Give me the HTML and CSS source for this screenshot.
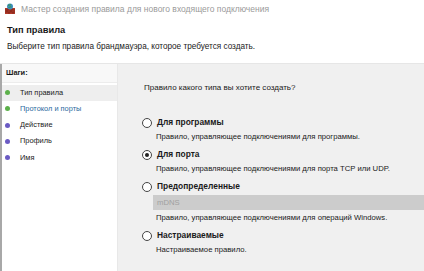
FILE: index.html
```html
<!DOCTYPE html>
<html>
<head>
    <title>Мастер создания правила</title>
    <link rel="stylesheet" href="styles.css">
</head>
<body>
    <div class="titlebar">
        <svg class="app-icon" width="12" height="12" viewBox="0 0 12 12">
            <rect x="1" y="5" width="10" height="6" fill="#b23a2a"/>
            <path d="M1 7h10M1 9h10M4 5v2M8 5v2M3 7v2M7 7v2M5 9v2M9 9v2" stroke="#6e1e14" stroke-width="0.6"/>
            <circle cx="6" cy="3.5" r="3" fill="#3f8fc0"/>
            <path d="M4 2.5c1-1 2 0 3-1M4.5 4.5c1 0 1.5-1 3-0.5" stroke="#2f9a3a" stroke-width="1" fill="none"/>
        </svg>
        <span class="title-text">Мастер создания правила для нового входящего подключения</span>
    </div>
    <div class="header">
        <div class="header-title">Тип правила</div>
        <div class="header-sub">Выберите тип правила брандмауэра, которое требуется создать.</div>
    </div>
    <div class="main">
        <div class="steps">
            <div class="steps-head">Шаги:</div>
            <div class="step done selected"><span class="dot"></span>Тип правила</div>
            <div class="step done current"><span class="dot"></span>Протокол и порты</div>
            <div class="step"><span class="dot"></span>Действие</div>
            <div class="step"><span class="dot"></span>Профиль</div>
            <div class="step"><span class="dot"></span>Имя</div>
        </div>
        <div class="content">
            <div class="question">Правило какого типа вы хотите создать?</div>
            <div class="option">
                <div class="label"><span class="radio"></span>Для программы</div>
                <div class="desc">Правило, управляющее подключениями для программы.</div>
            </div>
            <div class="option">
                <div class="label"><span class="radio checked"></span>Для порта</div>
                <div class="desc">Правило, управляющее подключениями для порта TCP или UDP.</div>
            </div>
            <div class="option">
                <div class="label"><span class="radio"></span>Предопределенные</div>
                <div class="select">mDNS</div>
                <div class="desc">Правило, управляющее подключениями для операций Windows.</div>
            </div>
            <div class="option">
                <div class="label"><span class="radio"></span>Настраиваемые</div>
                <div class="desc">Настраиваемое правило.</div>
            </div>
        </div>
    </div>
</body>
</html>
```

FILE: styles.css
```css
body {
    margin: 0;
    width: 424px;
    height: 271px;
    overflow: hidden;
    background: #fff;
    font-family: "Liberation Sans", Arial, sans-serif;
    font-size: 7.7px;
    color: #1a1a1a;
    display: flex;
    flex-direction: column;
}

.titlebar {
    height: 18px;
    display: flex;
    align-items: center;
    padding-left: 4px;
    gap: 5px;
}

.title-text {
    color: #9a9a9a;
    font-size: 8.5px;
}

.header {
    padding-left: 7px;
    height: 45px;
}

.header-title {
    margin-top: 6px;
    font-weight: bold;
    font-size: 9.3px;
    line-height: 13px;
}

.header-sub {
    margin-top: 4px;
    line-height: 12px;
    font-size: 8.2px;
}

.main {
    flex: 1;
    display: flex;
    border-top: 1px solid #e6e6e6;
}

.steps {
    width: 115px;
    border-left: 2px solid #a8a8a8;
    border-right: 1px solid #e8e8e8;
    background: #fff;
    font-size: 7.4px;
}

.steps-head {
    height: 18px;
    line-height: 18px;
    padding-left: 4px;
    font-weight: bold;
    font-size: 7.4px;
    background: #f8f8f8;
    border-bottom: 1px solid #ececec;
    margin-bottom: 1.5px;
}

.step {
    height: 16.3px;
    line-height: 16.3px;
    display: flex;
    align-items: center;
    padding-left: 3px;
}

.step.selected {
    background: #eeeeee;
}

.step.current {
    color: #2b6a9e;
}

.dot {
    width: 5px;
    height: 5px;
    border-radius: 50%;
    background: #6b5bc4;
    margin-right: 10px;
}

.step.done .dot {
    background: #5cb04a;
}

.content {
    flex: 1;
    background: #f0f0f0;
    padding-left: 26px;
    padding-top: 17px;
}

.question {
    line-height: 13px;
    font-size: 8px;
    margin-bottom: 22px;
}

.option {
    margin-bottom: 5.5px;
}

.label {
    display: flex;
    align-items: center;
    line-height: 13px;
    font-weight: bold;
    font-size: 8.4px;
    margin-left: -2px;
}

.radio {
    width: 8px;
    height: 8px;
    border: 1px solid #444;
    border-radius: 50%;
    background: #fff;
    margin-right: 5px;
    display: flex;
    align-items: center;
    justify-content: center;
}

.radio.checked::after {
    content: "";
    width: 4px;
    height: 4px;
    border-radius: 50%;
    background: #222;
}

.desc {
    margin-left: 12px;
    line-height: 13px;
    margin-top: 0.5px;
}

.select {
    margin: 1.5px 0 1px 9px;
    height: 15px;
    line-height: 15px;
    background: #cccccc;
    color: #a0a0a0;
    padding-left: 4px;
}
```
